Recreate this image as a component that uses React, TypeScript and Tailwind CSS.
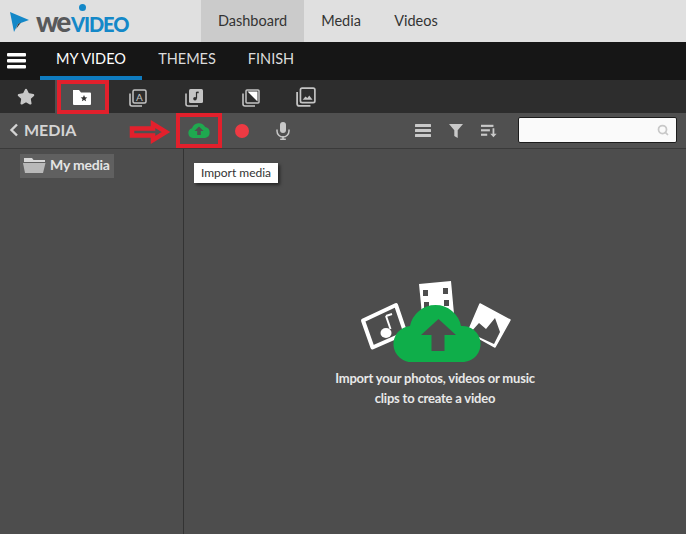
import { Star, Search } from 'lucide-react';

function LayerIcon({ size = 18, children }: { size?: number; children: React.ReactNode }) {
  return (
    <svg width={size} height={size} viewBox="0 0 18 18" fill="none" className="text-[#c4c4c4]">
      <path d="M1 4.5v10.5a2 2 0 0 0 2 2H13" stroke="currentColor" strokeWidth="1.6" />
      {children}
    </svg>
  );
}

function Logo() {
  return (
    <div className="relative flex w-[201px] items-center pl-[10px]">
      <svg width="19" height="20" viewBox="0 0 19 20" className="mt-[1px]">
        <path d="M0 0 L19 8 L8 12 L4 20 Z" fill="#1488c8" />
        <path d="M8 12 L11 10.5 L6 17 Z" fill="#3a3a3a" />
      </svg>
      <div className="ml-[7px] flex items-baseline font-black leading-none text-[#58595b]">
        <span className="text-[28px] tracking-[-2.2px]">we</span>
        <span className="ml-[2px] text-[20px] tracking-[-1.1px] text-[#1488c8]">VIDEO</span>
      </div>
      <div className="absolute left-[79px] top-[4px] h-[7px] w-[7px] rounded-full bg-[#1488c8]" />
    </div>
  );
}

export default function App() {
  return (
    <div className="relative h-[534px] w-[686px] overflow-hidden bg-[#4d4d4d] [font-family:Lato,sans-serif]">
      {/* top nav */}
      <div className="flex h-[42px] items-stretch bg-[#e0e0e0] text-[14.5px] text-[#333]">
        <Logo />
        <div className="flex w-[103px] items-center justify-center bg-[#cbcbcb]">Dashboard</div>
        <div className="flex w-[74px] items-center justify-center">Media</div>
        <div className="flex w-[76px] items-center justify-center">Videos</div>
      </div>

      {/* tabs */}
      <div className="flex h-[38px] items-stretch bg-[#161616] text-[14.5px] text-[#dcdcdc]">
        <div className="flex w-[40px] items-center pl-[7px] pb-[1px]">
          <svg width="19" height="16" viewBox="0 0 19 16" fill="#fff">
            <rect width="19" height="3.6" rx="1" />
            <rect y="6" width="19" height="3.6" rx="1" />
            <rect y="12" width="19" height="3.6" rx="1" />
          </svg>
        </div>
        <div className="flex w-[102px] items-center justify-center border-b-4 border-[#0f7cc0] text-white">MY VIDEO</div>
        <div className="flex w-[90px] items-center justify-center pb-1">THEMES</div>
        <div className="flex w-[78px] items-center justify-center pb-1">FINISH</div>
      </div>

      {/* category icons */}
      <div className="flex h-[33px] items-center bg-[#2d2d2d]">
        <div className="flex w-[55px] justify-center pr-[3px]">
          <Star size={18} fill="#c8c8c8" className="text-[#c8c8c8]" />
        </div>
        <div className="flex h-full w-[54px] items-center justify-center bg-[#4f4f4f]">
          <svg width="20" height="18" viewBox="0 0 20 18">
            <path d="M1 2h6l2 2.5h9a1 1 0 0 1 1 1V16a1 1 0 0 1-1 1H2a1 1 0 0 1-1-1Z" fill="#fff" />
            <path d="M12 7l1 2.2 2.3.2-1.8 1.5.6 2.3-2.1-1.2-2.1 1.2.6-2.3-1.8-1.5 2.3-.2Z" fill="#333" />
          </svg>
        </div>
        <div className="flex w-[58px] justify-center pt-[3px]">
          <LayerIcon>
            <rect x="4" y="1" width="13" height="13" rx="1.5" stroke="currentColor" strokeWidth="1.5" />
            <text x="10.5" y="11.5" textAnchor="middle" fontSize="10" fill="currentColor">A</text>
          </LayerIcon>
        </div>
        <div className="flex w-[54px] justify-center pt-[3px]">
          <LayerIcon>
            <rect x="4" y="0" width="14" height="14" rx="1.5" fill="currentColor" />
            <path d="M11.5 3v6.5" stroke="#2d2d2d" strokeWidth="1.2" />
            <path d="M11.5 3.4h2.2" stroke="#2d2d2d" strokeWidth="1.6" />
            <circle cx="10" cy="9.8" r="1.8" fill="#2d2d2d" />
          </LayerIcon>
        </div>
        <div className="flex w-[60px] justify-center pt-[3px]">
          <LayerIcon>
            <rect x="4" y="1" width="13" height="13" rx="1" stroke="currentColor" strokeWidth="1.5" />
            <path d="M5.5 2.5H15.500V12.500Z" fill="#fff" />
          </LayerIcon>
        </div>
        <div className="flex w-[50px] justify-center pt-[1px]">
          <LayerIcon size={20}>
            <rect x="4" y="1" width="13" height="13" rx="1.5" stroke="currentColor" strokeWidth="1.5" />
            <path d="M6 11.5l2.5-3 1.8 1.4 1.6-2.2 3 3.8Z" fill="currentColor" />
          </LayerIcon>
        </div>
      </div>

      {/* media toolbar */}
      <div className="flex h-[36px] items-center border-b border-[#3a3a3a] bg-[#505050]">
        <div className="flex w-[176px] items-center pb-[2px] pl-[9px] text-[16px] font-bold text-[#d4d4d4]">
          <svg width="10" height="14" viewBox="0 0 10 14" className="mr-[5px]" fill="none" stroke="#d4d4d4" strokeWidth="2.4">
            <path d="M8 1.5 2.5 7 8 12.5" />
          </svg>
          MEDIA
        </div>
        <div className="flex w-[46px] justify-center">
          <svg width="24" height="17" viewBox="0 0 24 17">
            <path d="M6 16a5 5 0 0 1-1-9.8A7.2 7.2 0 0 1 18.2 5 5.6 5.6 0 0 1 18 16Z" fill="#1fa84f" />
            <path d="M12 4.5l4.5 4.5h-2.7v4h-3.6V9H7.5Z" fill="#505050" />
          </svg>
        </div>
        <div className="flex w-[40px] justify-center">
          <div className="h-[14px] w-[14px] rounded-full bg-[#ee3a43]" />
        </div>
        <div className="flex w-[42px] justify-center">
          <svg width="14" height="18" viewBox="0 0 14 18" fill="#c8c8c8">
            <rect x="4" y="0" width="6" height="11" rx="3" />
            <path d="M1 7.5v1.5a6 6 0 0 0 12 0V7.5" fill="none" stroke="#c8c8c8" strokeWidth="1.5" />
            <rect x="6.2" y="14" width="1.6" height="3" />
            <rect x="4" y="16.5" width="6" height="1.5" rx="0.7" />
          </svg>
        </div>
        <div className="ml-auto flex items-center gap-[18px] pr-[9px]">
          <svg width="16" height="13" viewBox="0 0 16 13" fill="#c9c9c9">
            <rect width="16" height="3" rx="0.5" />
            <rect y="5" width="16" height="3" rx="0.5" />
            <rect y="10" width="16" height="3" rx="0.5" />
          </svg>
          <svg width="14" height="14" viewBox="0 0 14 14" fill="#c9c9c9">
            <path d="M0 0h14L8.7 6.2V14L5.3 12V6.2Z" />
          </svg>
          <svg width="16" height="14" viewBox="0 0 18 14" fill="#c9c9c9" className="mr-[3px]">
            <rect width="14" height="2.4" />
            <rect y="5" width="10" height="2.4" />
            <rect y="10" width="7" height="2.4" />
            <path d="M13 4h2v6h2.6L14 14l-3.6-4H13Z" />
          </svg>
          <div className="mb-[2px] flex h-[26px] w-[159px] items-center justify-end rounded-[2px] border border-[#1c1c1c] bg-[#fafafa] pr-[7px]">
            <Search size={12} strokeWidth={3.5} className="text-[#c8c8c8]" />
          </div>
        </div>
      </div>

      {/* body */}
      <div className="flex h-[385px]">
        <div className="w-[184px] border-r border-[#333] pl-[20px] pt-[5px]">
          <div className="flex h-[24px] w-[94px] items-center gap-[4px] bg-[#606060] pb-[3px] pl-[3px] text-[14px] font-bold tracking-[-0.2px] text-[#e4e4e4]">
            <svg width="23" height="16" viewBox="0 0 23 16">
              <path d="M1 3V1h8l1.5 2H22v2H1Z" fill="#d8d8d8" />
              <path d="M0 6h22.5L20 16H2Z" fill="#b9b9b9" />
            </svg>
            My media
          </div>
        </div>
        <div className="flex flex-1 flex-col items-center pt-[129px]">
          <svg width="160" height="90" viewBox="355 278 160 90">
            {/* music card */}
            <path d="M363 320.5 396 305 405.5 333 372.500 347.500Z" fill="none" stroke="#fff" strokeWidth="4" strokeLinejoin="round" />
            <path d="M386 316l4.500 13" stroke="#fff" strokeWidth="2" />
            <path d="M386 316l6-2" stroke="#fff" strokeWidth="2" />
            <ellipse cx="386" cy="333" rx="5.500" ry="5" fill="#fff" />
            {/* film strip */}
            <path d="M419 284 451 281 455 325 423 325Z" fill="#fff" />
            <rect x="423" y="290" width="5" height="6" fill="#4d4d4d" />
            <rect x="424" y="302" width="5" height="6" fill="#4d4d4d" />
            <rect x="443" y="288" width="5" height="6" fill="#4d4d4d" />
            <rect x="444" y="300" width="5" height="6" fill="#4d4d4d" />
            {/* photo card */}
            <path d="M480 304 510 320 495 347 468 332Z" fill="#fff" stroke="#fff" strokeWidth="1.500" strokeLinejoin="round" />
            <path d="M470 333 479 323 486 329 495 318 500 332 494 344Z" fill="#4d4d4d" />
            {/* cloud */}
            <path d="M413 362A18 18 0 0 1 410 326A26 26 0 0 1 461 326A18 18 0 0 1 464 362Z" fill="#0fae4a" />
            <path d="M438.500 319 456 335H444.500V351H431.500V335H421Z" fill="#4d4d4d" />
          </svg>
          <p className="text-center text-[13px] font-bold leading-[20px] tracking-[-0.2px] text-[#e8e8e8]">
            Import your photos, videos or music<br />clips to create a video
          </p>
        </div>
      </div>

      {/* tooltip */}
      <div className="absolute left-[194px] top-[163px] flex h-[20px] w-[84px] items-center justify-center bg-white text-[12px] text-[#333] shadow-[2px_2px_3px_rgba(0,0,0,0.5)]">
        Import media
      </div>

      {/* red annotations */}
      <div className="absolute left-[57px] top-[80px] h-[34px] w-[52px] border-4 border-[#e2202c]" />
      <div className="absolute left-[176px] top-[113px] h-[35px] w-[46px] border-4 border-[#e2202c]" />
      <svg className="absolute left-[129px] top-[120px]" width="42" height="24" viewBox="0 0 42 24" fill="none">
        <path d="M3 8.500h21V4l13 8-13 8v-4.500H3Z" stroke="#e2202c" strokeWidth="4.500" />
      </svg>
    </div>
  );
}
